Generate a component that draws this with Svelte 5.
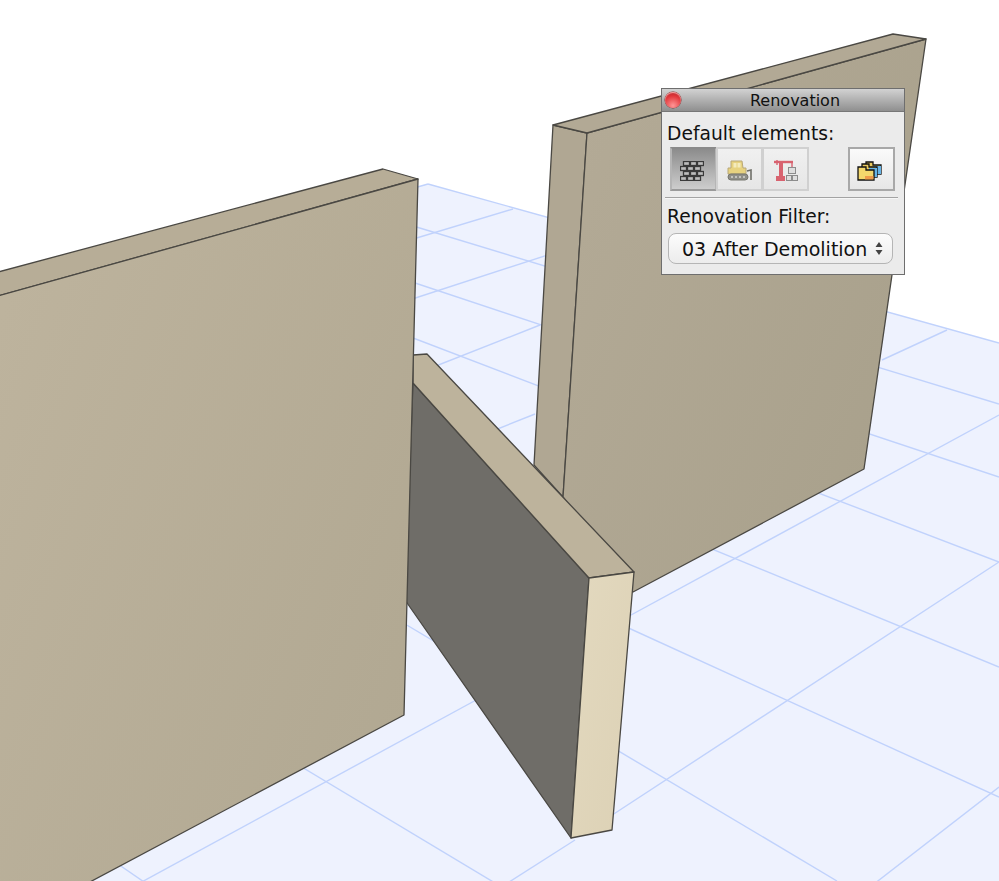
<script>
  // floor grid, as [x1, y1, x2, y2]
  const gridLines = [
    [428, 184, 999, 343],
    [428, 184, 400, 192],
    [400, 222, 999, 404],
    [400, 278, 999, 477],
    [400, 333, 999, 562],
    [600, 503, 999, 667],
    [600, 615, 999, 797],
    [400, 621, 837, 881],
    [290, 760, 500, 886],
    [115, 862, 147, 884],
    [400, 243, 513, 209],
    [400, 303, 600, 238],
    [413, 375, 540, 325],
    [480, 436, 535, 414],
    [882, 360, 947, 330],
    [620, 621, 999, 415],
    [600, 823, 999, 562],
    [500, 687, 138, 884],
    [999, 787, 874, 884],
    [575, 840, 506, 884],
  ];

  const bricks = [
    [3, 0], [10, 0], [17, 0],
    [0, 5], [7, 5], [14, 5],
    [3, 10], [10, 10], [17, 10],
    [0, 15], [7, 15], [14, 15],
  ];
</script>

<div class="view">
  <svg class="scene" width="999" height="881" viewBox="0 0 999 881">
    <defs>
      <linearGradient id="wallLeft" x1="0" y1="0.2" x2="1" y2="0.8">
        <stop offset="0" stop-color="#bdb39d" />
        <stop offset="1" stop-color="#b1a892" />
      </linearGradient>
      <linearGradient id="wallBack" x1="0" y1="0.2" x2="1" y2="0.8">
        <stop offset="0" stop-color="#b3aa96" />
        <stop offset="1" stop-color="#a8a08b" />
      </linearGradient>
      <linearGradient id="wallEnd" x1="0" y1="0" x2="1" y2="1">
        <stop offset="0" stop-color="#e3d9bf" />
        <stop offset="1" stop-color="#dcd1b5" />
      </linearGradient>
    </defs>

    <polygon class="floor" points="428,184 999,343 999,881 90,881 400,192" />
    {#each gridLines as [x1, y1, x2, y2]}
      <line class="grid" {x1} {y1} {x2} {y2} />
    {/each}

    <!-- back wall -->
    <polygon class="edge" fill="#b0a793" points="553,125 587,133 563,497 534,465" />
    <polygon class="edge" fill="url(#wallBack)" points="587,133 926,39 864,469 633,592 563,497" />
    <polygon class="edge" fill="#b2a995" points="553,125 893,34 926,39 587,133" />

    <!-- cross wall -->
    <polygon class="edge" fill="#6f6d68" points="413,383 589,578 571,838 405,600" />
    <polygon class="edge" fill="#bdb39c" points="413,355 427,354 634,572 589,578 413,383" />
    <polygon class="edge" fill="url(#wallEnd)" points="589,578 634,572 612,830 571,838" />

    <!-- front wall -->
    <polygon class="edge" fill="#b7ad97" points="-2,272 383,169 418,179 -2,296" />
    <polygon class="edge" fill="url(#wallLeft)" points="-2,296 418,179 404,715 88,883 -2,883" />
  </svg>

  <div class="panel">
    <div class="titlebar">
      <span class="close"></span>
      <span class="title">Renovation</span>
    </div>
    <div class="content">
      <div class="label">Default elements:</div>
      <div class="tools">
        <div class="segments">
          <button class="tool active" aria-label="Existing">
            <svg class="nudge" width="24" height="20" viewBox="0 0 24 20">
              {#each bricks as [x, y]}
                <rect x={x + 0.5} y={y + 0.5} width="6" height="4" fill="#bdbdbd" stroke="#3a3a3a" stroke-width="1.300" />
              {/each}
            </svg>
          </button>
          <button class="tool" aria-label="Demolish">
            <svg width="26" height="21" viewBox="0 0 26 21">
              <path d="M4 1h11l1 7h3v6H1V8h3z" fill="#e7d27f" stroke="#b9a878" />
              <rect x="6.500" y="3" width="3" height="4.500" fill="#f4ebbd" />
              <rect x="10.500" y="3" width="3" height="4.500" fill="#f4ebbd" />
              <rect x="1" y="14" width="20" height="6" rx="3" fill="#8f8f88" stroke="#77776f" />
              <circle cx="5" cy="17" r="1" fill="#d6d6d0" />
              <circle cx="9" cy="17" r="1" fill="#d6d6d0" />
              <circle cx="13" cy="17" r="1" fill="#d6d6d0" />
              <circle cx="17" cy="17" r="1" fill="#d6d6d0" />
              <path d="M20 11l4-1v10" fill="none" stroke="#6f6f68" stroke-width="1.600" />
            </svg>
          </button>
          <button class="tool" aria-label="New">
            <svg width="24" height="23" viewBox="0 0 24 23">
              <path d="M0 3h19" stroke="#d8626f" stroke-width="2.400" />
              <path d="M3 1v5M18 3v5" stroke="#d8626f" stroke-width="1.400" fill="none" />
              <path d="M5 3h4v14h2v5H2v-5h3z" fill="#d8626f" />
              <rect x="14.500" y="8.500" width="7" height="6" fill="#dedede" stroke="#8c8c8c" />
              <rect x="12.500" y="16.500" width="5" height="5" fill="#dedede" stroke="#8c8c8c" />
              <rect x="18.500" y="16.500" width="5" height="5" fill="#dedede" stroke="#8c8c8c" />
            </svg>
          </button>
        </div>
        <button class="tool lone" aria-label="Renovation palette">
          <svg class="nudge" width="26" height="20" viewBox="0 0 26 20">
            <path d="M9 1h7v3h8v9H9z" fill="#e9c95f" stroke="#111" stroke-width="1.300" />
            <path d="M16 5h8v8h-8z" fill="#67b4e6" />
            <path d="M5 3h7v3h8v10H5z" fill="#e9c95f" stroke="#111" stroke-width="1.300" />
            <path d="M12 7h8v9h-8z" fill="#67b4e6" />
            <path d="M1 6h8v3h8v10H1z" fill="#f3d76c" stroke="#111" stroke-width="1.300" />
            <rect x="8" y="15" width="8.400" height="3.400" fill="#ee9a4a" />
          </svg>
        </button>
      </div>
      <hr class="divider" />
      <div class="label">Renovation Filter:</div>
      <button class="select">
        <span>03 After Demolition</span>
        <svg width="8" height="15" viewBox="0 0 8 15">
          <path d="M4 1l3.500 5h-7zM4 14l3.500-5h-7z" fill="#444" />
        </svg>
      </button>
    </div>
  </div>
</div>

<style>
  :global(body) {
    background: #fff;
  }
  .view {
    position: relative;
    width: 999px;
    height: 881px;
    overflow: hidden;
    font-family: "DejaVu Sans", sans-serif;
    color: #111;
  }
  .scene {
    display: block;
    filter: blur(0.35px);
  }
  .floor {
    fill: #eef2fe;
  }
  .grid {
    stroke: #c0d2fc;
    stroke-width: 1.400;
  }
  .edge {
    stroke: #4a4843;
    stroke-width: 1.300;
    stroke-linejoin: round;
  }
  .panel {
    position: absolute;
    left: 661px;
    top: 88px;
    width: 244px;
    height: 187px;
    box-sizing: border-box;
    border: 1px solid #6e6e6e;
    background: #ebebeb;
    display: flex;
    flex-direction: column;
  }
  .titlebar {
    height: 23px;
    box-sizing: border-box;
    flex: none;
    display: flex;
    align-items: center;
    padding-left: 3px;
    background: linear-gradient(#d2d2d2, #8f8f8f);
    border-bottom: 1px solid #777;
  }
  .close {
    width: 16px;
    height: 16px;
    flex: none;
    border-radius: 50%;
    background: radial-gradient(circle at 50% 85%, #ff9696, #e2383c 60%, #a81a20 100%);
    box-shadow: inset 0 1px 1px #f7b0b0, 0 0 0 0.5px #7a2f2f;
  }
  .title {
    flex: 1;
    text-align: center;
    font-size: 16px;
    padding-left: 5px;
  }
  .content {
    flex: 1;
    display: flex;
    flex-direction: column;
    padding: 12px 5px 0;
  }
  .label {
    font-size: 18.7px;
    line-height: 20px;
    white-space: nowrap;
  }
  .tools {
    display: flex;
    justify-content: space-between;
    margin-top: 3px;
    padding: 0 4px 0 3px;
  }
  .segments {
    display: flex;
  }
  .tool {
    width: 47px;
    height: 44px;
    padding: 3px 0 0;
    margin: 0 -1px 0 0;
    box-sizing: border-box;
    border: 2px solid #d0d0d0;
    background: linear-gradient(#f0f0f0, #e6e6e6);
    display: flex;
    align-items: center;
    justify-content: center;
  }
  .tool.active {
    background: linear-gradient(#8c8c8c, #cdcdcd);
    border-color: #8a8a8a #b5b5b5 #9a9a9a #b5b5b5;
  }
  .tool.lone {
    margin: 0;
    border-color: #a8a8a8;
    background: linear-gradient(#fafafa, #e6e6e6);
  }
  .nudge {
    margin-right: 3px;
  }
  .divider {
    width: 233px;
    margin: 6px 0 8px -2px;
    border: 0;
    border-top: 1px solid #a3a3a3;
    border-bottom: 1px solid #f6f6f6;
    align-self: flex-start;
  }
  .select {
    width: 225px;
    height: 31px;
    margin-top: 6px;
    margin-left: 1px;
    box-sizing: border-box;
    border: 1px solid #b5b5b5;
    border-radius: 8px;
    background: linear-gradient(#fcfcfc, #ececec);
    padding: 0 9px 0 13px;
    display: flex;
    align-items: center;
    justify-content: space-between;
    font-family: inherit;
    font-size: 19px;
    color: #111;
    white-space: nowrap;
  }
</style>
